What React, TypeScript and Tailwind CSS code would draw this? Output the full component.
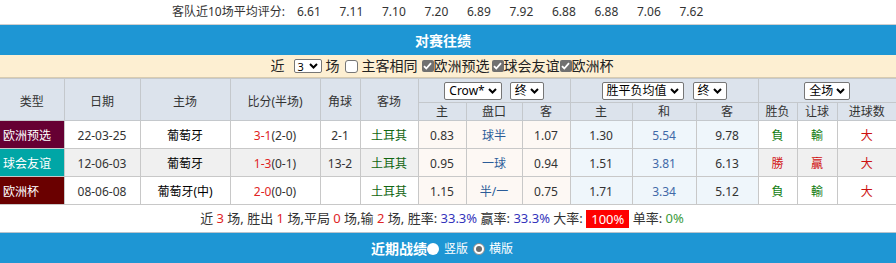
const scores = ['6.61', '7.11', '7.10', '7.20', '6.89', '7.92', '6.88', '6.88', '7.06', '7.62']

const rows = [
  {
    type: '欧洲预选', typeBg: 'bg-[#660033]', bg: 'bg-white', date: '22-03-25', home: '葡萄牙', score: '3-1', half: '(2-0)', corner: '2-1',
    away: '土耳其', h: '0.83', pk: '球半', a: '1.07', w: '1.30', d: '5.54', l: '9.78',
    r1: '負', r1c: 'text-[#107c10]', r2: '輸', r2c: 'text-[#107c10]', r3: '大', r3c: 'text-[#cc1111]',
  },
  {
    type: '球会友谊', typeBg: 'bg-[#00a6a6]', bg: 'bg-[#f0f0f0]', date: '12-06-03', home: '葡萄牙', score: '1-3', half: '(0-1)', corner: '13-2',
    away: '土耳其', h: '0.95', pk: '一球', a: '0.94', w: '1.51', d: '3.81', l: '6.13',
    r1: '勝', r1c: 'text-[#d01010]', r2: '贏', r2c: 'text-[#d01010]', r3: '大', r3c: 'text-[#cc1111]',
  },
  {
    type: '欧洲杯', typeBg: 'bg-[#6a0000]', bg: 'bg-white', date: '08-06-08', home: '葡萄牙(中)', score: '2-0', half: '(0-0)', corner: '',
    away: '土耳其', h: '1.15', pk: '半/一', a: '0.75', w: '1.71', d: '3.34', l: '5.12',
    r1: '負', r1c: 'text-[#107c10]', r2: '輸', r2c: 'text-[#107c10]', r3: '大', r3c: 'text-[#cc1111]',
  },
]

const widths = [64, 76, 90, 90, 40, 58, 48, 56, 48, 62, 64, 62, 39, 40, 59]

function Chevron() {
  return (
    <svg width="9" height="6" viewBox="0 0 9 6" className="ml-[3px] shrink-0">
      <path d="M1 1l3.5 3.5L8 1" fill="none" stroke="#000" strokeWidth="2" />
    </svg>
  )
}

function FakeSelect({ label }: { label: string }) {
  return (
    <span className="inline-flex items-center h-[18px] px-[4px] border border-[#767676] rounded-[2px] bg-white text-[12px] leading-[16px] text-black">
      {label}
      <Chevron />
    </span>
  )
}

function Checkbox({ checked }: { checked?: boolean }) {
  if (!checked) {
    return <span className="inline-block w-[13px] h-[13px] rounded-[3px] border border-[#767676] bg-white" />
  }
  return (
    <span className="inline-flex items-center justify-center w-[12px] h-[12px] rounded-[2px] bg-[#707070]">
      <svg width="9" height="8" viewBox="0 0 9 8">
        <path d="M1 4.2l2.3 2.3L8 1.2" fill="none" stroke="#fff" strokeWidth="1.8" />
      </svg>
    </span>
  )
}

const th = 'border border-[#c4c8cc] bg-[#dce3ec] text-[#333] font-normal text-center p-0'
const td = 'border border-[#c8c8c8] text-center p-0 pt-[2px]'

export default function App() {
  return (
    <div className="w-[896px] bg-white text-[12px] text-[#333] font-[family-name:Noto_Sans,Noto_Sans_CJK_SC,sans-serif]">
      {/* 评分 */}
      <div className="h-[25px] border-b border-[#cfcfcf] flex items-center pl-[172px] leading-none">
        <span className="w-[125px]">客队近10场平均评分:</span>
        {scores.map((s, i) => (
          <span key={i} className="w-[42.5px]">{s}</span>
        ))}
      </div>

      <div className="h-[30px] bg-[#1e96d4] text-white font-bold text-[14px] flex items-center justify-center pr-[10px]">
        对赛往绩
      </div>

      {/* 筛选 */}
      <div className="h-[23px] bg-[#fdefd2] border-b border-[#d9ccb0] flex items-center justify-center pr-[12px] text-[14px] text-[#222] leading-none">
        <span>近</span>
        <span className="inline-flex items-center h-[14px] w-[28px] ml-[9px] px-[3px] border border-[#767676] rounded-[2px] bg-white text-[11px] text-black">
          3<span className="flex-1" />
          <svg width="9" height="6" viewBox="0 0 9 6">
            <path d="M1 1l3.5 3.5L8 1" fill="none" stroke="#000" strokeWidth="2" />
          </svg>
        </span>
        <span className="ml-[4px]">场</span>
        <span className="ml-[5px] flex"><Checkbox /></span>
        <span className="ml-[4px]">主客相同</span>
        <span className="ml-[4px] flex"><Checkbox checked /></span>
        <span>欧洲预选</span>
        <span className="ml-[2px] flex"><Checkbox checked /></span>
        <span>球会友谊</span>
        <span className="flex"><Checkbox checked /></span>
        <span>欧洲杯</span>
      </div>

      <table className="w-[896px] table-fixed border-collapse">
        <colgroup>
          {widths.map((w, i) => (
            <col key={i} style={{ width: w }} />
          ))}
        </colgroup>
        <thead>
          <tr className="h-[24px]">
            <th rowSpan={2} className={th + ' border-l-0 pt-[4px]'}>类型</th>
            <th rowSpan={2} className={th + ' pt-[4px]'}>日期</th>
            <th rowSpan={2} className={th + ' pt-[4px]'}>主场</th>
            <th rowSpan={2} className={th + ' pt-[4px]'}>比分(半场)</th>
            <th rowSpan={2} className={th + ' pt-[4px]'}>角球</th>
            <th rowSpan={2} className={th + ' pt-[4px]'}>客场</th>
            <th colSpan={3} className={th}>
              <div className="flex items-center justify-center gap-[8px]">
                <FakeSelect label="Crow*" />
                <FakeSelect label="终" />
              </div>
            </th>
            <th colSpan={3} className={th}>
              <div className="flex items-center justify-center gap-[9px]">
                <FakeSelect label="胜平负均值" />
                <FakeSelect label="终" />
              </div>
            </th>
            <th colSpan={3} className={th + ' border-r-0'}>
              <div className="flex items-center justify-center">
                <FakeSelect label="全场" />
              </div>
            </th>
          </tr>
          <tr className="h-[18px] leading-[16px]">
            <th className={th}>主</th>
            <th className={th}>盘口</th>
            <th className={th}>客</th>
            <th className={th}>主</th>
            <th className={th}>和</th>
            <th className={th}>客</th>
            <th className={th}>胜负</th>
            <th className={th}>让球</th>
            <th className={th + ' border-r-0'}>进球数</th>
          </tr>
        </thead>
        <tbody>
          {rows.map((r, i) => (
            <tr key={i} className="h-[28px]">
              <td className={td + ' border-l-0 text-left pl-[3px] text-white ' + r.typeBg}>{r.type}</td>
              <td className={td + ' ' + r.bg}>{r.date}</td>
              <td className={td + ' text-black ' + r.bg}>{r.home}</td>
              <td className={td + ' ' + r.bg}>
                <span className="text-[#e02424]">{r.score}</span>
                {r.half}
              </td>
              <td className={td + ' ' + r.bg}>{r.corner}</td>
              <td className={td + ' text-[#116611] ' + r.bg}>{r.away}</td>
              <td className={td + ' bg-[#fdf8f4]'}>{r.h}</td>
              <td className={td + ' bg-[#fdf8f4] text-[#2b5c98]'}>{r.pk}</td>
              <td className={td + ' bg-[#fdf8f4]'}>{r.a}</td>
              <td className={td + ' bg-[#eff6fb]'}>{r.w}</td>
              <td className={td + ' bg-[#eff6fb] text-[#4169a8]'}>{r.d}</td>
              <td className={td + ' bg-[#eff6fb]'}>{r.l}</td>
              <td className={td + ' ' + r.bg + ' ' + r.r1c}>{r.r1}</td>
              <td className={td + ' ' + r.bg + ' ' + r.r2c}>{r.r2}</td>
              <td className={td + ' border-r-0 ' + r.bg + ' ' + r.r3c}>{r.r3}</td>
            </tr>
          ))}
        </tbody>
      </table>

      {/* 统计 */}
      <div className="h-[28px] border-b border-[#b9c3cc] flex items-center justify-center pr-[12px] whitespace-pre text-[13px]">
        <span>近 </span><span className="text-[#e02424]">3</span><span> 场, 胜出 </span>
        <span className="text-[#e02424]">1</span><span> 场,平局 </span>
        <span className="text-[#e02424]">0</span><span> 场,输 </span>
        <span className="text-[#e02424]">2</span><span> 场, 胜率: </span>
        <span className="text-[#3333bb]">33.3%</span><span> 赢率: </span>
        <span className="text-[#3333bb]">33.3%</span><span> 大率: </span>
        <span className="bg-[#ff0000] text-white px-[5px] leading-[18px]">100%</span>
        <span> 单率: </span>
        <span className="text-[#3a9a3a]">0%</span>
      </div>

      {/* 近期战绩 */}
      <div className="h-[31px] bg-[#1e96d4] text-white flex items-center justify-center pr-[12px]">
        <span className="font-bold text-[14px]">近期战绩</span>
        <span className="w-[12px] h-[12px] rounded-full bg-white" />
        <span className="ml-[5px] text-[12px]">竖版</span>
        <span className="ml-[5px] w-[12px] h-[12px] rounded-full bg-white border border-[#8a8a8a] flex items-center justify-center">
          <span className="w-[6px] h-[6px] rounded-full bg-[#6b6b6b]" />
        </span>
        <span className="ml-[4px] text-[12px]">横版</span>
      </div>
    </div>
  )
}
